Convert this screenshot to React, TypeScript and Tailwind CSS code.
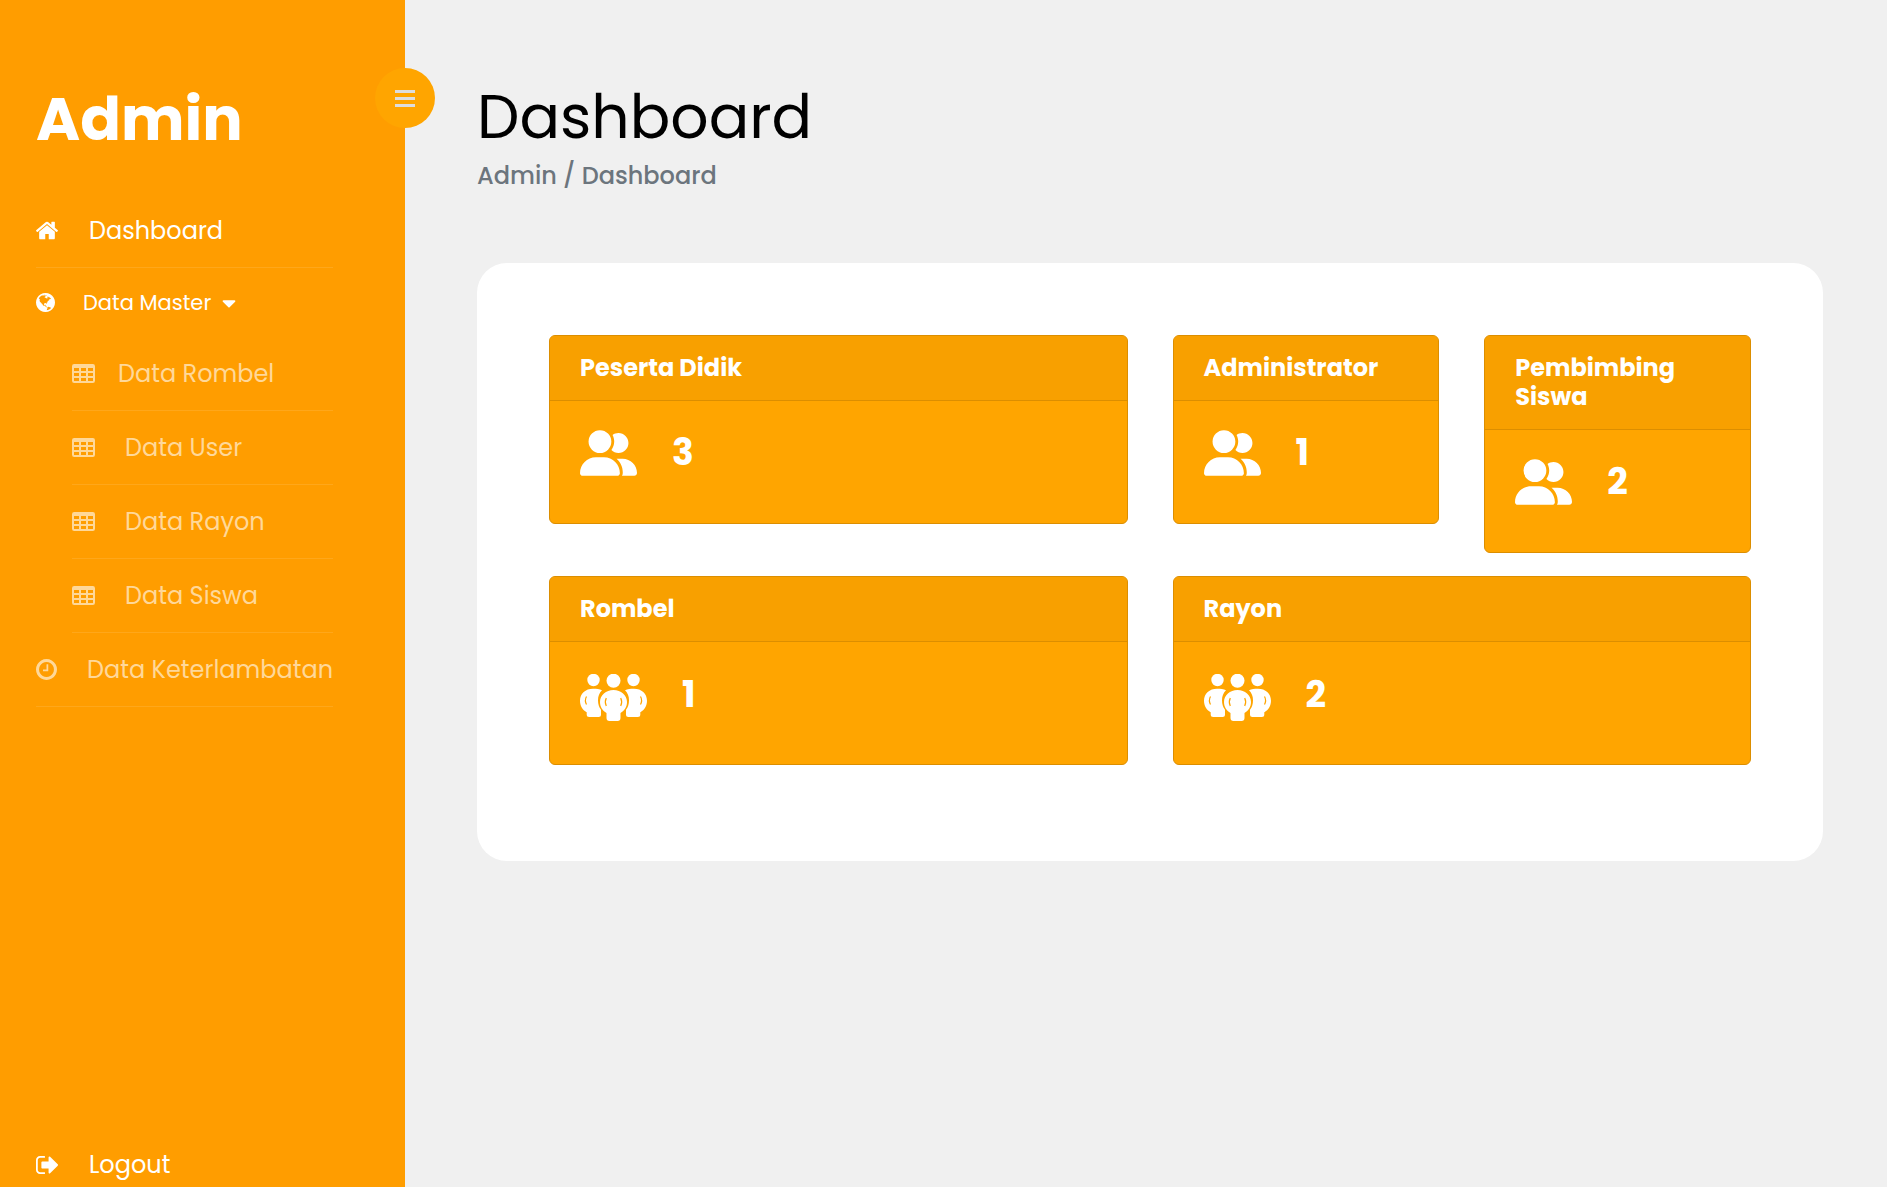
import type { ReactNode } from "react";
import { FaCaretDown } from "react-icons/fa";
import { FaUserGroup } from "react-icons/fa6";

function Glyph({ d, className, box = "0 0 1792 1792" }: { d: string; className: string; box?: string }) {
  return (
    <svg viewBox={box} className={className} fill="currentColor" aria-hidden="true">
      <path d={d} />
    </svg>
  );
}

const HOME =
  "M1472 992v480q0 26-19 45t-45 19h-384v-384h-256v384h-384q-26 0-45-19t-19-45v-480q0-1 .5-3t.5-3l575-474 575 474q1 2 1 6zm223-69l-62 74q-8 9-21 11h-3q-13 0-21-7l-692-577-692 577q-12 8-24 7-13-2-21-11l-62-74q-8-10-7-23.5t11-21.5l719-599q32-26 76-26t76 26l244 204v-195q0-14 9-23t23-9h192q14 0 23 9t9 23v408l219 182q10 8 11 21.5t-7 23.5z";
const GLOBE =
  "M896 128q209 0 385.5 103t279.5 279.5 103 385.5-103 385.5-279.5 279.5-385.5 103-385.5-103-279.5-279.5-103-385.5 103-385.5 279.5-279.5 385.5-103zm274 521q-2 1-9.5 9.5t-13.5 9.5q2 0 4.5-5t5-11 3.5-7q6-7 22-15 14-6 52-12 34-8 51 11-2-2 9.5-13t14.5-12q3-2 15-4.5t15-7.5l2-22q-12 1-17.5-7t-6.5-21q0 2-6 8 0-7-4.5-8t-11.5 1-9 1q-10-3-15-7.5t-8-16.5-4-15q-2-5-9.5-11t-9.5-10q-1-2-2.5-5.5t-3-6.5-4-5.5-5.5-2.5-7 5-7.5 10-4.5 5q-3-2-6-1.5t-4.5 1-4.5 3-5 3.5q-3 2-8.5 3t-8.5 2q15-5-1-11-10-4-16-3 9-4 7.5-12t-8.5-14h5q-1-4-8.5-8.5t-17.5-8.5-13-6q-8-5-34-9.5t-33-.5q-5 6-4.5 10.5t4 14 3.5 12.5q1 6-5.5 13t-6.5 12q0 7 14 15.5t10 21.5q-3 8-16 16t-16 12q-5 8-1.5 18.5t10.5 16.5q2 2 1.5 4t-3.5 4.5-5.5 4-6.5 3.5l-3 2q-11 5-20.5-6t-13.5-26q-7-25-16-30-23-8-29 1-5-13-41-26-25-9-58-4 6-1 0-15-7-15-19-12 3-6 4-17.5t1-13.5q3-13 12-23 1-1 7-8.5t9.5-13.5.5-6q35 4 50-11 5-5 11.5-17t10.5-17q9-6 14-5.5t14.5 5.5 14.5 5q14 1 15.5-11t-7.5-20q12 1 3-17-4-7-8-9-12-4-27 5-8 4 2 8-1-1-9.5 10.5t-16.5 17.5-16-5q-1-1-5.5-13.5t-9.5-13.5q-8 0-16 15 3-8-11-15t-24-8q19-12-8-27-7-4-20.5-5t-19.5 4q-5 7-5.5 11.5t5 8 10.5 5.5 11.5 4 8.5 3q14 10 8 14-2 1-8.5 3.5t-11.5 4.5-6 4q-3 4 0 14t-2 14q-5-5-9-17.5t-7-16.5q7 9-25 6l-10-1q-4 0-16 2t-20.5 1-13.5-8q-4-8 0-20 1-4 4-2-4-3-11-9.5t-10-8.5q-46 15-94 41 6 1 12-1 5-2 13-6.5t10-5.5q34-14 42-7l5-5q14 16 20 25-7-4-30-1-20 6-22 12 7 12 5 18-4-3-11.5-10t-14.5-11-15-5q-16 0-22 1-146 80-235 222 7 7 12 8 4 1 5 9t2.5 11 11.5-3q9 8 3 19 1-1 44 27 19 17 21 21 3 11-10 18-1-2-9-9t-9-4q-3 5 .5 18.5t10.5 12.5q-7 0-9.5 16t-2.5 35.5-1 23.5l2 1q-3 12 5.5 34.5t21.5 19.5q-13 3 20 43 6 8 8 9 3 2 12 7.5t15 10 10 10.5q4 5 10 22.5t14 23.5q-2 6 9.5 20t10.5 23q-1 0-2.5 1t-2.5 1q3 7 15.5 14t15.5 13q1 3 2 10t3 11 8 2q2-20-24-62-15-25-17-29-3-5-5.5-15.5t-4.5-14.5q2 0 6 1.5t8.5 3.5 7.5 4 2 3q-3 7 2 17.5t12 18.5 17 19 12 13q6 6 14 19.5t0 13.5q9 0 20 10.5t17 19.5q5 8 8 26t5 24q2 7 8.5 13.5t12.5 9.5l16 8 13 7q5 2 18.5 10.5t21.5 11.5q10 4 16 4t14.5-2.5 13.5-3.5q15-2 29 15t21 21q36 19 55 11-2 1 .5 7.5t8 15.5 9 14.5 5.5 8.5q5 6 18 15t18 15q6-4 7-9-3 8 7 20t18 10q14-3 14-32-31 15-49-18 0-1-2.5-5.5t-4-8.5-2.5-8.5 0-7.5 5-3q9 0 10-3.5t-2-12.5-4-13q-1-8-11-20t-12-15q-5 9-16 8t-16-9q0 1-1.5 5.5t-1.5 6.5q-13 0-15-1 1-3 2.5-17.5t3.5-22.5q1-4 5.5-12t7.5-14.5 4-12.5-4.5-9.5-17.5-2.5q-19 1-26 20-1 3-3 10.5t-5 11.5-9 7q-7 3-24 2t-24-5q-13-8-22.5-29t-9.5-37q0-10 2.5-26.5t3-25-5.5-24.5q3-2 9-9.5t10-10.5q2-1 4.5-1.5t4.5 0 4-1.5 3-6q-1-1-4-3-3-3-4-3 7 3 28.5-1.5t27.5 1.5q15 11 22-2 0-1-2.5-9.5t-.5-13.5q5 27 29 9 3 3 15.5 5t17.5 5q3 2 7 5.5t5.5 4.5 5-.5 8.5-6.5q10 14 12 24 11 40 19 44 7 3 11 2t4.5-9.5 0-14-1.5-12.5l-1-8v-18l-1-8q-15-3-18.5-12t1.5-18.5 15-18.5q1-1 8-3.5t15.5-6.5 12.5-8q21-19 15-35 7 0 11-9-1 0-5-3t-7.5-5-4.5-2q9-5 2-16 5-3 7.5-11t7.5-10q9 12 21 2 7-8 1-16 5-7 20.5-10.5t18.5-9.5q7 2 8-2t1-12 3-12q4-5 15-9t13-5l17-11q3-4 0-4 18 2 31-11 10-11-6-20 3-6-3-9.5t-15-5.5q3-1 11.5-.5t10.5-1.5q15-10-7-16-17-5-43 12zm-163 877q206-36 351-189-3-3-12.5-4.5t-12.5-3.5q-18-7-24-8 1-7-2.5-13t-8-9-12.5-8-11-7q-2-2-7-6t-7-5.5-7.5-4.5-8.5-2-10 1l-3 1q-3 1-5.5 2.5t-5.5 3-4 3 0 2.5q-21-17-36-22-5-1-11-5.5t-10.5-7-10-1.5-11.5 7q-5 5-6 15t-2 13q-7-5 0-17.5t2-18.5q-3-6-10.5-4.5t-12 4.5-11.5 8.5-9 6.5-8.5 5.5-8.5 7.5q-3 4-6 12t-5 11q-2-4-11.5-6.5t-9.5-5.5q2 10 4 35t5 38q7 31-12 48-27 25-29 40-4 22 12 26 0 7-8 20.5t-7 21.5q0 6 2 16z";
const CLOCK =
  "M1024 544v448q0 14-9 23t-23 9h-320q-14 0-23-9t-9-23v-64q0-14 9-23t23-9h224v-352q0-14 9-23t23-9h64q14 0 23 9t9 23zm416 352q0-148-73-273t-198-198-273-73-273 73-198 198-73 273 73 273 198 198 273 73 273-73 198-198 73-273zm224 0q0 209-103 385.5t-279.5 279.5-385.5 103-385.5-103-279.5-279.5-103-385.5 103-385.5 279.5-279.5 385.5-103 385.5 103 279.5 279.5 103 385.5z";
const SIGN_OUT =
  "M704 1440q0 4 1 20t.5 26.5-3 23.5-10 19.5-20.5 6.5h-320q-119 0-203.5-84.5t-84.5-203.5v-704q0-119 84.5-203.5t203.5-84.5h320q13 0 22.5 9.5t9.5 22.5q0 4 1 20t.5 26.5-3 23.5-10 19.5-20.5 6.5h-320q-66 0-113 47t-47 113v704q0 66 47 113t113 47h312l11.5 1 11.5 3 8 5.5 7 9 2 13.5zm928-544q0 26-19 45l-544 544q-19 19-45 19t-45-19-19-45v-288h-448q-26 0-45-19t-19-45v-384q0-26 19-45t45-19h448v-288q0-26 19-45t45-19 45 19l544 544q19 19 19 45z";

function TableIcon() {
  return (
    <svg viewBox="0 0 23 19" className="h-[19px] w-[23px] shrink-0" fill="currentColor" aria-hidden="true">
      <path
        fillRule="evenodd"
        d="M2.200 0h18.600A2.200 2.200 0 0 1 23 2.200v14.600a2.200 2.200 0 0 1-2.200 2.200H2.200A2.200 2.200 0 0 1 0 16.800V2.200A2.200 2.200 0 0 1 2.200 0zM2 4h5v3H2zM9 4h5v3H9zM16 4h5v3h-5zM2 9h5v3H2zM9 9h5v3H9zM16 9h5v3h-5zM2 14h5v3H2zM9 14h5v3H9zM16 14h5v3h-5z"
      />
    </svg>
  );
}

function GroupIcon() {
  return (
    <svg viewBox="0 0 67 47" className="h-[47px] w-[67px] shrink-0" fill="currentColor" aria-hidden="true">
      <circle cx="13.500" cy="6" r="6.200" />
      <circle cx="33.500" cy="6.700" r="7" />
      <circle cx="53.500" cy="6" r="6.200" />
      <path d="M13 14.700c3.500 0 6.500.4 9 1.600-2.600 2.500-4 6-4 10 0 4 1 7 3 9.500v4.700a2.500 2.500 0 0 1-2.500 2.500H9.200a2.500 2.500 0 0 1-2.500-2.500v-2.300C2.500 36 0 31.500 0 26.700 0 19.500 5.500 14.700 13 14.700z" />
      <path d="M54 14.700c-3.500 0-6.500.4-9 1.600 2.600 2.500 4 6 4 10 0 4-1 7-3 9.500v4.700a2.500 2.500 0 0 0 2.500 2.500h9.300a2.500 2.500 0 0 0 2.500-2.500v-2.300C64.500 36 67 31.500 67 26.700 67 19.500 61.500 14.700 54 14.700z" />
      <path d="M33.500 16C41 16 47 21 47 28c0 5-2.500 8.800-6.500 11v5a3 3 0 0 1-3 3h-8a3 3 0 0 1-3-3v-5C22.500 36.800 20 33 20 28c0-7 6-12 13.500-12z" />
      <path
        d="M6.500 22.500q-2.200 4 0 8M60.500 22.500q2.200 4 0 8M26.300 24q-2 4 0 8M40.700 24q2 4 0 8"
        fill="none"
        stroke="#ffa500"
        strokeWidth="1.200"
      />
    </svg>
  );
}

function NavRow({ icon, label, tone }: { icon: ReactNode; label: string; tone: string }) {
  return (
    <li className="border-b border-white/10">
      <a href="#" className={`flex h-[73px] items-center whitespace-nowrap text-2xl ${tone}`}>
        {icon}
        {label}
      </a>
    </li>
  );
}

function StatCard({ title, value, group, span }: { title: string; value: number; group?: boolean; span?: boolean }) {
  return (
    <section
      className={`self-start overflow-hidden rounded-md border border-[#dc8e00] bg-[#ffa500] text-white ${span ? "col-span-2" : ""}`}
    >
      <header className="border-b border-[#dc8e00] bg-[#f8a000] px-[30px] pt-[17px] pb-[18px]">
        <h2 className="text-2xl leading-[29px] font-bold">{title}</h2>
      </header>
      <div className={`flex h-[122px] items-start gap-[35px] px-[30px] ${group ? "pt-8" : "pt-[29px]"}`}>
        {group ? <GroupIcon /> : <FaUserGroup className="h-[46px] w-[57px]" />}
        <p className={`text-4xl font-bold ${group ? "pt-px" : "pt-[3px]"}`}>{value}</p>
      </div>
    </section>
  );
}

export default function App() {
  return (
    <div className="flex min-h-screen bg-[#f0f0f0] font-['Poppins','Inter',sans-serif]">
      <aside className="relative flex w-[405px] shrink-0 flex-col bg-[#ff9d00] px-9 text-white">
        <button
          type="button"
          aria-label="Toggle menu"
          className="absolute top-[68px] -right-[30px] flex size-[60px] flex-col items-center justify-center gap-1 rounded-full bg-[#ffa500]"
        >
          <span className="h-[3px] w-5 bg-[#ddd]" />
          <span className="h-[3px] w-5 bg-[#ddd]" />
          <span className="h-[3px] w-5 bg-[#ddd]" />
        </button>
        <h1 className="pt-[83px] text-[60px] leading-[72px] font-bold">Admin</h1>
        <nav className="mt-[39px] flex grow flex-col pr-9">
          <ul>
            <NavRow
              icon={<Glyph d={HOME} box="89 128 1614 1536" className="mr-[31px] h-[21px] w-[22px] shrink-0" />}
              label="Dashboard"
              tone="text-white"
            />
            <li>
              <button type="button" className="flex h-[69px] items-center text-[21px]">
                <Glyph d={GLOBE} box="128 128 1536 1536" className="mr-7 size-[19px] shrink-0" />
                Data Master
                <FaCaretDown className="ml-[7px] size-[22px]" />
              </button>
              <ul className="pl-9">
                <NavRow icon={<span className="mr-[23px]"><TableIcon /></span>} label="Data Rombel" tone="text-[#ffd899]" />
                <NavRow icon={<span className="mr-[30px]"><TableIcon /></span>} label="Data User" tone="text-[#ffd899]" />
                <NavRow icon={<span className="mr-[30px]"><TableIcon /></span>} label="Data Rayon" tone="text-[#ffd899]" />
                <NavRow icon={<span className="mr-[30px]"><TableIcon /></span>} label="Data Siswa" tone="text-[#ffd899]" />
              </ul>
            </li>
            <NavRow
              icon={<Glyph d={CLOCK} box="128 128 1536 1536" className="mr-[30px] size-[21px] shrink-0" />}
              label="Data Keterlambatan"
              tone="text-[#ffd899]"
            />
          </ul>
          <a href="#" className="mt-auto mb-[6px] flex items-center text-2xl">
            <Glyph d={SIGN_OUT} box="64 192 1568 1408" className="mr-[31px] h-5 w-[22px] shrink-0" />
            Logout
          </a>
        </nav>
      </aside>
      <main className="min-w-0 grow pr-16 pl-[72px]">
        <h2 className="pt-[81px] text-[60px] leading-[72px] text-black">Dashboard</h2>
        <p className="mt-[5px] text-2xl leading-9 font-medium text-[#6c757d]">Admin / Dashboard</p>
        <div className="mt-[69px] grid grid-cols-4 gap-x-[45px] gap-y-[23px] rounded-[30px] bg-white px-[72px] pt-[72px] pb-24">
          <StatCard title="Peserta Didik" value={3} span />
          <StatCard title="Administrator" value={1} />
          <StatCard title="Pembimbing Siswa" value={2} />
          <StatCard title="Rombel" value={1} group span />
          <StatCard title="Rayon" value={2} group span />
        </div>
      </main>
    </div>
  );
}
